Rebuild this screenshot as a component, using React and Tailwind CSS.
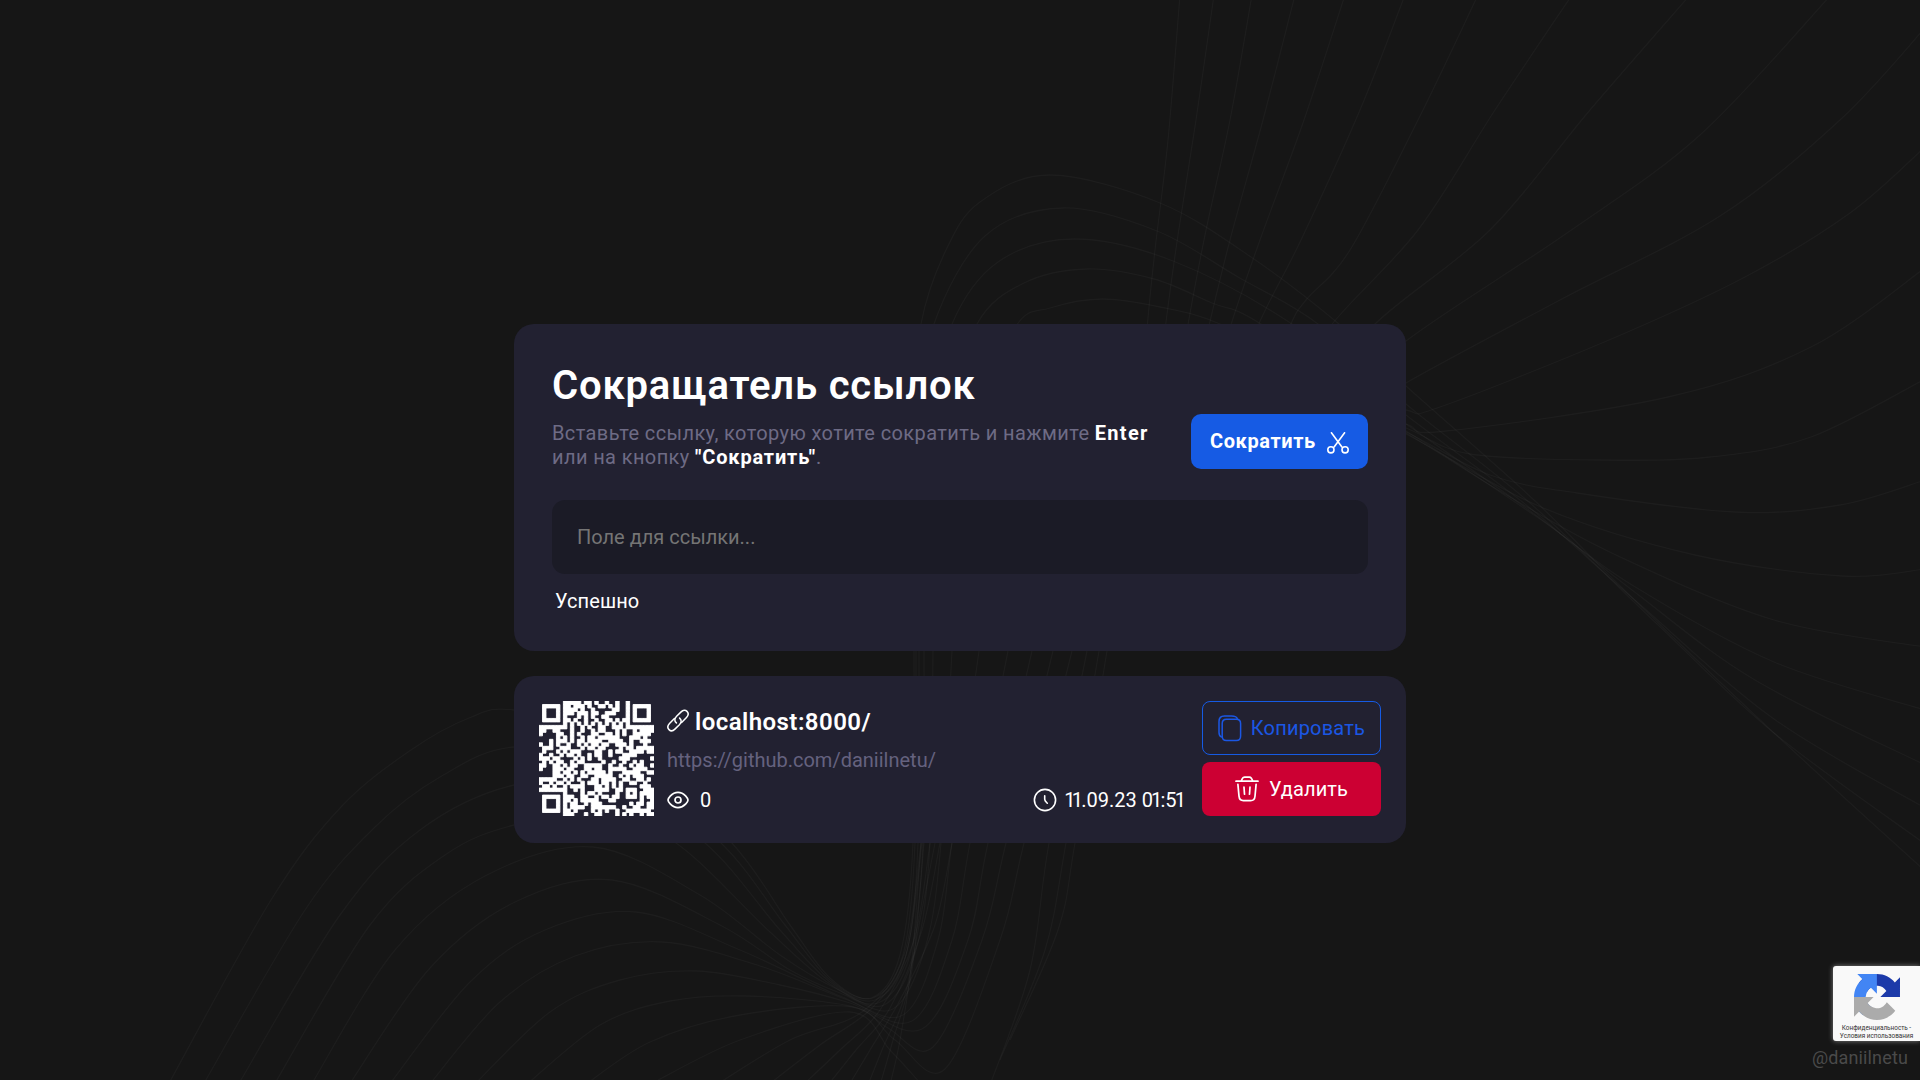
import React from "react";

/* ---------- QR code (version 4, level H, mask 3) ---------- */
const exp = [];
const log = [];
for (let i = 0, x = 1; i < 255; i++) {
  exp[i] = x;
  log[x] = i;
  x <<= 1;
  if (x & 256) x ^= 0x11d;
}
const mul = (a, b) => (a && b ? exp[(log[a] + log[b]) % 255] : 0);

function errorWords(data, n) {
  let g = [1];
  for (let i = 0; i < n; i++) {
    const r = new Array(g.length + 1).fill(0);
    g.forEach((c, k) => {
      r[k] ^= c;
      r[k + 1] ^= mul(c, exp[i]);
    });
    g = r;
  }
  const res = data.concat(new Array(n).fill(0));
  for (let i = 0; i < data.length; i++) {
    const c = res[i];
    if (c) g.forEach((v, k) => { res[i + k] ^= mul(v, c); });
  }
  return res.slice(data.length);
}

function qrMatrix(text) {
  const N = 33;
  const bits = [];
  const push = (v, n) => {
    for (let i = n - 1; i >= 0; i--) bits.push((v >> i) & 1);
  };
  push(4, 4);
  push(text.length, 8);
  for (const c of text) push(c.charCodeAt(0), 8);
  push(0, Math.min(4, 288 - bits.length));
  while (bits.length % 8) bits.push(0);
  const data = [];
  for (let i = 0; i < bits.length; i += 8) data.push(parseInt(bits.slice(i, i + 8).join(""), 2));
  for (let p = 0; data.length < 36; p++) data.push(p % 2 ? 17 : 236);
  const blocks = [0, 1, 2, 3].map((b) => data.slice(b * 9, b * 9 + 9));
  const ecs = blocks.map((b) => errorWords(b, 16));
  const out = [];
  for (let i = 0; i < 9; i++) blocks.forEach((b) => out.push(b[i]));
  for (let i = 0; i < 16; i++) ecs.forEach((b) => out.push(b[i]));

  const m = Array.from({ length: N }, () => new Array(N).fill(null));
  const finder = (r, c) => {
    for (let i = -1; i < 8; i++)
      for (let j = -1; j < 8; j++) {
        if (r + i < 0 || c + j < 0 || r + i >= N || c + j >= N) continue;
        const d = Math.max(Math.abs(i - 3), Math.abs(j - 3));
        m[r + i][c + j] = d === 3 || d < 2;
      }
  };
  finder(0, 0);
  finder(0, N - 7);
  finder(N - 7, 0);
  for (let i = -2; i < 3; i++)
    for (let j = -2; j < 3; j++) m[26 + i][26 + j] = Math.max(Math.abs(i), Math.abs(j)) !== 1;
  for (let i = 8; i < N - 8; i++) {
    m[6][i] = i % 2 === 0;
    m[i][6] = i % 2 === 0;
  }
  const f = "001100111010000".split("").map((c) => c === "1").reverse();
  for (let i = 0; i < 15; i++) {
    if (i < 6) m[i][8] = f[i];
    else if (i < 8) m[i + 1][8] = f[i];
    else m[N - 15 + i][8] = f[i];
    if (i < 8) m[8][N - i - 1] = f[i];
    else if (i < 9) m[8][7] = f[i];
    else m[8][14 - i] = f[i];
  }
  m[N - 8][8] = true;
  let k = 0;
  let up = true;
  for (let c = N - 1; c > 0; c -= 2) {
    if (c === 6) c--;
    for (let t = 0; t < N; t++) {
      const r = up ? N - 1 - t : t;
      for (let d = 0; d < 2; d++) {
        const cc = c - d;
        if (m[r][cc] !== null) continue;
        let v = k < 800 ? (out[k >> 3] >> (7 - (k & 7))) & 1 : 0;
        k++;
        if ((r + cc) % 3 === 0) v ^= 1;
        m[r][cc] = !!v;
      }
    }
    up = !up;
  }
  return m;
}

function QrCode({ text }) {
  let d = "";
  qrMatrix(text).forEach((row, r) =>
    row.forEach((v, c) => {
      if (!v) d += `M${c} ${r}h1v1h-1z`;
    })
  );
  return (
    <svg viewBox="0 0 33 33" className="h-[115px] w-[115px] shrink-0">
      <path d={d} fill="#fff" stroke="#fff" strokeWidth=".26" />
    </svg>
  );
}

/* ---------- Background lines ---------- */
const curves = [
  // upper fan
  [[1180, -5], [1168, 140], [1155, 250], [1147, 330], [1142, 420]],
  [[1214, -5], [1196, 120], [1178, 235], [1165, 330], [1155, 420]],
  [[1252, -5], [1230, 120], [1205, 235], [1187, 330], [1172, 420]],
  [[1295, -5], [1263, 120], [1230, 240], [1208, 330], [1188, 420]],
  [[1345, -5], [1304, 120], [1260, 240], [1230, 328], [1205, 420]],
  [[1405, -5], [1360, 110], [1301, 240], [1257, 328], [1225, 420]],
  [[1478, -5], [1418, 120], [1350, 250], [1306, 300], [1289, 328], [1250, 420]],
  [[1572, -5], [1495, 110], [1418, 230], [1329, 328], [1290, 400]],
  [[1690, -5], [1590, 110], [1490, 230], [1371, 328], [1330, 400]],
  [[1831, -5], [1700, 135], [1567, 233], [1406, 341], [1350, 400]],
  [[1925, 28], [1840, 120], [1720, 216], [1560, 300], [1406, 383], [1370, 410]],
  [[1925, 147], [1850, 213], [1745, 277], [1609, 340], [1440, 407], [1406, 410], [1340, 390]],
  [[1925, 268], [1811, 347], [1668, 397], [1446, 431], [1406, 424], [1340, 400]],
  [[1925, 379], [1811, 437], [1710, 457], [1600, 460], [1470, 454], [1406, 428], [1340, 405]],
  [[1925, 480], [1840, 505], [1735, 512], [1577, 493], [1490, 475], [1406, 432], [1340, 405]],
  [[1925, 569], [1842, 576], [1695, 555], [1541, 507], [1406, 434], [1340, 405]],
  [[1925, 647], [1774, 620], [1616, 555], [1510, 497], [1406, 433], [1340, 400]],
  [[1925, 710], [1774, 662], [1632, 585], [1537, 517], [1406, 431], [1300, 370], [1220, 324], [1160, 307], [1102, 299], [1050, 308], [1016, 326], [975, 420]],
  [[1925, 765], [1755, 680], [1632, 590], [1537, 516], [1406, 424], [1261, 324], [1212, 303], [1154, 279], [1087, 269], [1024, 283], [977, 324], [950, 420]],
  [[1925, 808], [1774, 719], [1636, 601], [1530, 508], [1406, 415], [1292, 324], [1173, 261], [1074, 239], [998, 262], [952, 324], [930, 420]],
  [[1925, 844], [1774, 733], [1656, 623], [1530, 503], [1406, 404], [1318, 324], [1238, 277], [1157, 231], [1063, 208], [985, 236], [934, 324], [920, 420]],
  [[1925, 871], [1774, 733], [1616, 582], [1534, 500], [1406, 386], [1339, 324], [1251, 257], [1160, 203], [1050, 175], [980, 202], [946, 250], [921, 324], [914, 420]],
  // lower left waves
  [[168, 1085], [271, 900], [341, 807], [411, 750], [469, 718], [514, 710], [620, 735], [732, 843], [790, 925], [830, 978], [871, 998], [900, 955], [913, 843], [914, 651]],
  [[203, 1085], [305, 910], [375, 827], [440, 777], [514, 747], [620, 765], [721, 843], [785, 925], [830, 980], [873, 998], [903, 955], [915, 843], [916, 651]],
  [[238, 1085], [340, 915], [420, 830], [514, 785], [610, 785], [705, 843], [780, 930], [830, 982], [875, 1000], [906, 955], [918, 843], [919, 651]],
  [[274, 1085], [370, 925], [445, 855], [514, 825], [600, 815], [676, 843], [770, 932], [830, 984], [878, 1003], [910, 955], [923, 843], [924, 651]],
  [[311, 1085], [395, 950], [485, 876], [593, 847], [700, 895], [780, 955], [835, 988], [884, 1005], [916, 950], [930, 843], [933, 651]],
  [[349, 1085], [430, 968], [515, 902], [612, 880], [720, 925], [790, 970], [840, 993], [893, 1009], [926, 945], [941, 843], [952, 651]],
  [[389, 1085], [470, 982], [545, 930], [636, 912], [740, 950], [840, 996], [903, 1015], [938, 940], [952, 843], [979, 651]],
  [[429, 1085], [500, 1002], [575, 956], [662, 942], [760, 966], [845, 999], [912, 1021], [952, 940], [970, 843], [1008, 651]],
  [[474, 1085], [550, 1012], [620, 980], [697, 971], [780, 985], [850, 1003], [922, 1029], [968, 940], [988, 843], [1032, 651]],
  [[526, 1085], [600, 1025], [670, 1001], [746, 996], [850, 1006], [888, 1028], [933, 1047], [982, 940], [1006, 843], [1053, 651]],
  [[585, 1085], [650, 1042], [740, 1015], [852, 1007], [895, 1040], [945, 1069], [1000, 940], [1024, 843], [1072, 651]],
  [[649, 1085], [740, 1040], [850, 1012], [890, 1050], [922, 1085]],
  [[990, 1085], [1030, 970], [1049, 843], [1087, 651]],
  [[1000, 1060], [1045, 950], [1066, 843], [1099, 651]],
  [[1010, 1040], [1058, 930], [1075, 843], [1107, 651]],
  [[716, 1085], [790, 1040], [862, 1012], [904, 955], [921, 843]],
  [[768, 1085], [820, 1045], [872, 1008], [906, 955], [922, 843]],
  [[803, 1085], [840, 1050], [880, 1010], [914, 940], [930, 843]],
  [[828, 1085], [856, 1050], [890, 1008], [922, 930], [940, 843]],
  [[849, 1085], [870, 1050], [900, 1000], [935, 925], [952, 843]],
  [[868, 1085], [882, 1050], [905, 995], [920, 920], [935, 843]],
  [[880, 1085], [893, 1040], [912, 970], [924, 843]],
  [[890, 1085], [900, 1040], [912, 960], [921, 843]],
];

function spline(p) {
  let d = `M${p[0][0]} ${p[0][1]}`;
  for (let i = 0; i < p.length - 1; i++) {
    const a = p[i - 1] || p[i];
    const b = p[i];
    const c = p[i + 1];
    const e = p[i + 2] || c;
    d += `C${b[0] + (c[0] - a[0]) / 6} ${b[1] + (c[1] - a[1]) / 6} ${c[0] - (e[0] - b[0]) / 6} ${c[1] - (e[1] - b[1]) / 6} ${c[0]} ${c[1]}`;
  }
  return d;
}

function Waves() {
  return (
    <svg viewBox="0 0 1920 1080" className="absolute inset-0 h-full w-full" fill="none" stroke="#fff" strokeOpacity=".03" strokeWidth="1.3">
      {curves.map((c, i) => (
        <path key={i} d={spline(c)} />
      ))}
    </svg>
  );
}

/* ---------- Icons ---------- */
function Icon({ w, h, sw = 1.6, children, className = "" }) {
  return (
    <svg width={w} height={h} viewBox={`0 0 ${w} ${h}`} fill="none" stroke="currentColor" strokeWidth={sw} strokeLinecap="round" strokeLinejoin="round" className={`shrink-0 ${className}`}>
      {children}
    </svg>
  );
}

const ScissorsIcon = () => (
  <Icon w={22} h={22} className="mt-[2px]">
    <path d="M4.4.8L14.9 15M17.6.8L7.1 15" />
    <circle cx="3.9" cy="17.8" r="3.1" />
    <circle cx="18.1" cy="17.8" r="3.1" />
  </Icon>
);

const LinkIcon = () => (
  <Icon w={22} h={23} sw={1.5} className="-mt-[3px]">
    <path d="M14.6 13.4L19.5 8.4C21.4 6.4 21.6 4 20 2.4C18.4.8 16 1 14.1 2.9L9.6 7.3C7.4 9.6 7.2 12 9.4 13.9" />
    <path d="M7.4 9.6L2.5 14.6C.6 16.6.4 19 2 20.6C3.6 22.2 6 22 7.9 20.1L12.4 15.7C14.6 13.4 14.8 11 12.6 9.1" />
  </Icon>
);

const EyeIcon = () => (
  <Icon w={22} h={18} sw={1.7}>
    <path d="M1 9C1 7.8 2 6.4 3.2 5.1C5.2 3 7.8 1.4 11 1.4S16.8 3 18.8 5.1C20 6.4 21 7.8 21 9S20 11.6 18.8 12.9C16.8 15 14.2 16.6 11 16.6S5.2 15 3.2 12.9C2 11.6 1 10.2 1 9Z" />
    <circle cx="11" cy="9" r="3" />
  </Icon>
);

const ClockIcon = () => (
  <Icon w={24} h={24}>
    <circle cx="12" cy="12" r="10.6" />
    <path d="M11.7 7.8V11.2C11.7 12.8 12.7 13.6 14.3 15.2" />
  </Icon>
);

const CopyIcon = () => (
  <Icon w={24} h={27} sw={1.5}>
    <path d="M4.2 8.6C4.2 5.4 5.2 4.3 8.4 4.3H18.4C21.4 4.3 22.6 5.4 22.6 8.6V21C22.6 24.4 21.4 25.6 18.4 25.6H8.4C5.2 25.6 4.2 24.4 4.2 21Z" />
    <path d="M3.4 21.9C1.6 21.2 1 19.8 1 17.2V6.8C1 2.6 2.6 1 6.4 1H13.6C17 1 18.8 1.7 19.4 4" />
  </Icon>
);

const TrashIcon = () => (
  <Icon w={24} h={26} sw={1.7}>
    <path d="M1 5.2H23M6.2 4.8L7.6 2.2C8 1.4 8.6 1.1 9.6 1.1H14.2C15.2 1.1 15.8 1.4 16.3 2.2L17.8 4.8" />
    <path d="M2.9 8.4L4 20.2C4.3 23.6 5.4 24.6 8.4 24.6H15.6C18.6 24.6 19.7 23.6 20 20.2L21.1 8.4" />
    <path d="M9 11.2L9.5 18.2M15 11.2L14.5 18.2" />
  </Icon>
);

const RecaptchaLogo = () => (
  <svg viewBox="0 0 64 64" className="h-[46px] w-[46px]">
    <path fill="#1c3aa9" d="M64 31.955l-.033-1.37V4.687l-7.16 7.16C50.948 4.674 42.033.093 32.05.093c-10.4 0-19.622 4.96-25.458 12.64l11.736 11.86a15.55 15.55 0 0 1 4.754-5.334c2.05-1.6 4.952-2.906 8.968-2.906.485 0 .86.057 1.135.163 4.976.393 9.288 3.14 11.828 7.124l-8.307 8.307L64 31.953" />
    <path fill="#4285f4" d="M31.862.094l-1.37.033H4.594l7.16 7.16C4.58 13.147 0 22.06 0 32.046c0 10.4 4.96 19.622 12.64 25.458L24.5 45.768a15.55 15.55 0 0 1-5.334-4.754c-1.6-2.05-2.906-4.952-2.906-8.968 0-.485.057-.86.163-1.135.393-4.976 3.14-9.288 7.124-11.828l8.307 8.307L31.86.095" />
    <path fill="#ababab" d="M.001 32.045l.033 1.37v25.898l7.16-7.16c5.86 7.173 14.774 11.754 24.76 11.754 10.4 0 19.622-4.96 25.458-12.64l-11.736-11.86a15.55 15.55 0 0 1-4.754 5.334c-2.05 1.6-4.952 2.906-8.968 2.906-.485 0-.86-.057-1.135-.163-4.976-.393-9.288-3.14-11.828-7.124l8.307-8.307c-10.522.04-22.4.066-27.295-.005" />
  </svg>
);

/* ---------- Page ---------- */
function ShortenerCard() {
  return (
    <section className="rounded-[20px] bg-[#222131] p-[38px]">
      <div className="flex items-end justify-between">
        <div>
          <h1 className="text-[40px] leading-[47px] font-semibold tracking-[0.82px] whitespace-nowrap">Сокращатель ссылок</h1>
          <p className="mt-3 text-[20px] leading-[24px] tracking-[0.39px] whitespace-nowrap text-[#6e6b85]">
            Вставьте ссылку, которую хотите сократить и нажмите <b className="font-bold tracking-[1.3px] text-white">Enter</b>
            <br />
            или на кнопку <b className="font-bold tracking-[0.85px] text-white">"Сократить"</b>.
          </p>
        </div>
        <button className="flex h-[55px] w-[177px] items-center justify-between rounded-[10px] bg-[#165be4] px-[19px] text-[20px] font-bold tracking-[0.6px]">
          <span className="-mt-px">Сократить</span>
          <ScissorsIcon />
        </button>
      </div>
      <input
        placeholder="Поле для ссылки..."
        className="mt-[31px] block h-[74px] w-full rounded-[13px] bg-[#1b1b26] px-[25px] text-[20px] outline-none placeholder:text-[#757575]"
      />
      <p className="mt-[15px] pl-[3px] text-[20px] leading-[24px] tracking-[0.1px]">Успешно</p>
    </section>
  );
}

function LinkCard() {
  return (
    <section className="flex h-[167px] items-start rounded-[20px] bg-[#222131] p-[25px]">
      <QrCode text="http://localhost:8000/undefined" />
      <div className="ml-[13px] flex-1 pt-[7px]">
        <div className="flex h-7 items-center gap-[6px] text-[24px] leading-7 font-semibold tracking-[0.45px]">
          <LinkIcon />
          <span>localhost:8000/</span>
        </div>
        <p className="mt-3 text-[20px] leading-6 text-[#65627f]">https://github.com/daniilnetu/</p>
        <div className="mt-4 flex h-6 items-center justify-between text-[20px] leading-6">
          <div className="flex items-center gap-[11px]">
            <EyeIcon />
            <span>0</span>
          </div>
          <div className="flex items-center gap-[9px] pr-[3px]">
            <ClockIcon />
            <span className="whitespace-nowrap">
              {"11.09.23 01:51".split("").map((c, i) =>
                c === "1" ? <span key={i} className="-mr-[1.9px] -ml-[1.9px]">1</span> : c
              )}
            </span>
          </div>
        </div>
      </div>
      <div className="ml-[15px] flex w-[179px] flex-col gap-[7px] text-[20px]">
        <button className="flex h-[54px] items-center justify-center gap-[9px] rounded-[8px] border border-[#165be4] tracking-[0.2px] text-[#1b57e4]">
          <CopyIcon />
          Копировать
        </button>
        <button className="flex h-[54px] items-center justify-center gap-[10px] rounded-[8px] bg-[#cc0033] tracking-[0.1px]">
          <TrashIcon />
          Удалить
        </button>
      </div>
    </section>
  );
}

export default function App() {
  return (
    <div className="relative h-screen overflow-hidden bg-[#161616] font-['Roboto','Noto_Sans',sans-serif] text-white">
      <Waves />
      <main className="relative mx-auto flex w-[892px] flex-col gap-[25px] pt-[324px]">
        <ShortenerCard />
        <LinkCard />
      </main>
      <footer className="absolute right-0 bottom-0 flex flex-col items-end">
        <div className="flex h-[75px] w-[87px] flex-col items-center rounded-l-[3px] bg-[#f9f9f9] pt-[8px] text-[6.4px] leading-[8px] text-[#333] shadow-[0_0_5px_gray]">
          <RecaptchaLogo />
          <span className="mt-[4px] whitespace-nowrap">Конфиденциальность -</span>
          <span className="whitespace-nowrap">Условия использования</span>
        </div>
        <span className="mt-[6px] mr-[12px] mb-[12px] text-[18px] leading-[21px] tracking-[0.15px] text-[#4a4a4a]">@daniilnetu</span>
      </footer>
    </div>
  );
}
